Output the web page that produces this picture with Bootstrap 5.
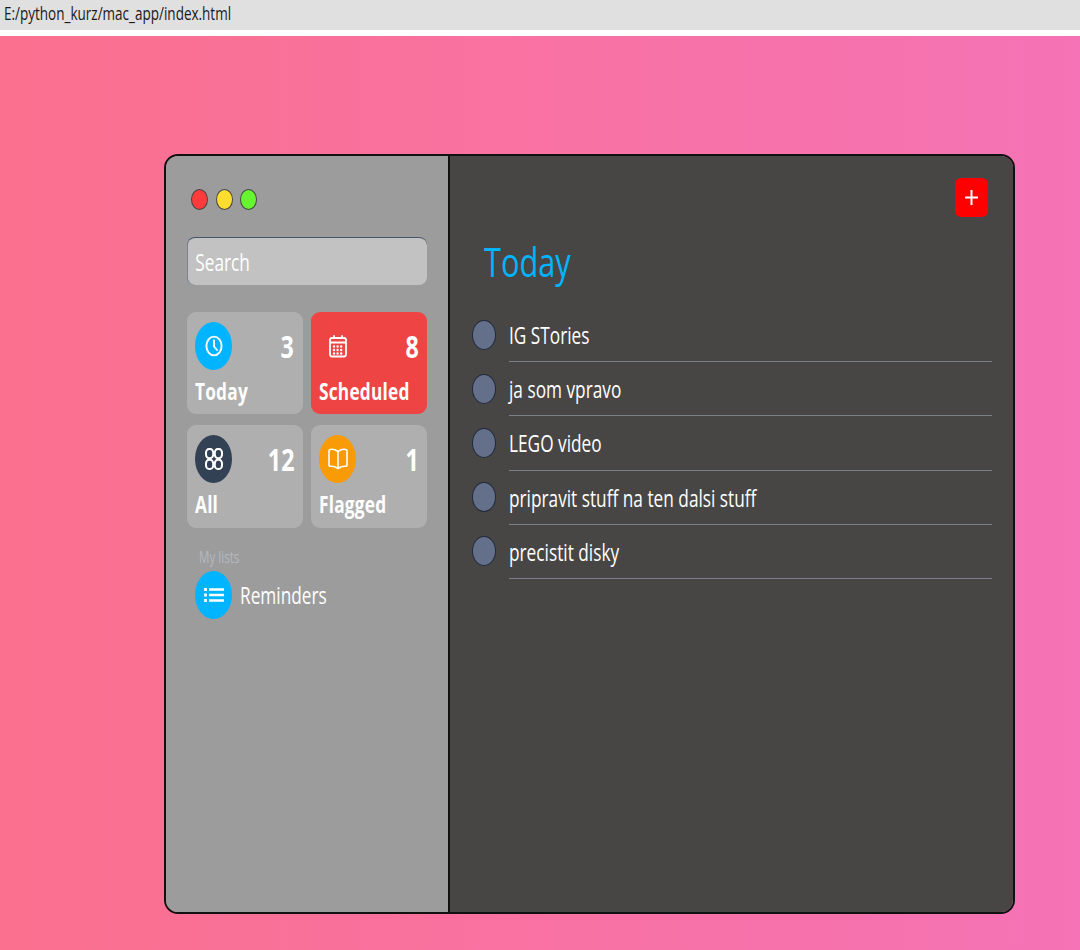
<!DOCTYPE html>
<html lang="en">
<head>
    <meta charset="UTF-8">
    <meta name="viewport" content="width=device-width, initial-scale=1.0">
    <title>Reminders</title>
    <link href="https://cdn.jsdelivr.net/npm/bootstrap@5.3.0/dist/css/bootstrap.min.css" rel="stylesheet">
    <script src="https://cdn.jsdelivr.net/npm/bootstrap@5.3.0/dist/js/bootstrap.bundle.min.js"></script>
    <style>
        html, body { height: 950px; overflow: hidden; }
        body { font-family: "Open Sans", "Liberation Sans", sans-serif; color: #fff; background: #fff; }
        /* the reference is squeezed sideways, so text is narrowed the same way */
        .squeeze { display: inline-block; white-space: nowrap; transform: scaleX(.75); transform-origin: left center; }
        .squeeze-end { transform-origin: right center; }
        .url-bar { height: 30px; background: #e0e0e0; color: #1a1a1a; font-size: 18px; line-height: 26px; padding-left: 4px; }
        .page-bg { margin-top: 6px; height: 914px; padding: 118px 65px 0 164px; background: linear-gradient(90deg, #fb708e, #f573b6); }
        .app-window { height: 760px; border: 2px solid #111; border-radius: 14px; overflow: hidden; }
        .side-pane { width: 282px; background: #9c9c9c; padding: 33px 21px 0; }
        .main-pane { background: #474644; border-left: 2px solid #111; padding: 22px 22px 0; }
        .dot { width: 17px; height: 21px; border-radius: 50%; border: 1px solid #444; }
        .dot-red { background: #ff3b3b; }
        .dot-yellow { background: #ffdd2e; }
        .dot-green { background: #66f52e; }
        .traffic { margin: 0 0 27px 4px; gap: 7.5px; }
        .search-wrap { height: 48px; }
        .search-box { display: block; height: 48px; width: 320px; background: #c2c2c2; border: 0; border-top: 1px solid #475569; border-left: 1px solid #64748b; border-radius: 11px / 8px; color: #fff; font-size: 23px; padding: 0 10px; outline: 0; transform: scaleX(.75); transform-origin: left center; }
        .search-box::placeholder { color: #fff; opacity: 1; }
        .tile-grid { display: grid; grid-template-columns: 116px 116px; grid-template-rows: 102px 103px; gap: 11px 8px; margin-top: 27px; width: 240px; }
        .tile { background: #afafaf; border-radius: 9px; padding: 10px 8px 0; }
        .tile-red { background: #ef4444; }
        .tile-left { padding-right: 9px; }
        .round-icon { width: 37px; height: 48px; border-radius: 50%; flex: none; }
        .ic-blue { background: #00b4ff; }
        .ic-dark { background: #334155; }
        .ic-orange { background: #f99b07; }
        .ic-red { background: #ef4444; }
        .tile-num { font-size: 31px; font-weight: 700; line-height: 1; }
        .tile-name { font-size: 23px; font-weight: 700; line-height: 28px; margin-top: 7px; letter-spacing: .3px; }
        .lists-label { font-size: 15.5px; color: #b4b8c0; line-height: 18px; margin: 20px 0 5px 12px; }
        .reminder-row { margin-left: 8px; gap: 8px; font-size: 23px; }
        .add-btn { width: 33px; height: 39px; background: #ff0000; border: 0; border-radius: 6px; padding: 0; }
        .day-title { color: #00b4ff; font-size: 41px; font-weight: 400; line-height: 50px; margin: 19px 0 0 12px; }
        .task-list { margin-top: 22px; width: 520px; }
        .task-row { height: 54.2px; gap: 13px; }
        .task-circle { width: 24px; height: 30px; border-radius: 50%; background: #64708a; border: 1.5px solid #1e293b; flex: none; margin-top: 11.5px; }
        .task-text { height: 100%; border-bottom: 1px solid #7a7f8a; font-size: 23px; line-height: 30px; padding-top: 12px; }
    </style>
</head>
<body>
    <div class="url-bar"><span class="squeeze">E:/python_kurz/mac_app/index.html</span></div>
    <div class="page-bg">
        <div class="app-window d-flex">
            <div class="side-pane flex-shrink-0">
                <div class="traffic d-flex">
                    <div class="dot dot-red"></div>
                    <div class="dot dot-yellow"></div>
                    <div class="dot dot-green"></div>
                </div>
                <div class="search-wrap">
                    <input class="search-box" type="text" placeholder="Search">
                </div>
                <div class="tile-grid">
                    <div class="tile tile-left">
                        <div class="d-flex justify-content-between align-items-center">
                            <div class="round-icon ic-blue d-flex align-items-center justify-content-center">
                                <svg width="18" height="22" viewBox="0 0 18 22" fill="none" stroke="#fff" stroke-width="1.9" stroke-linecap="round"><ellipse cx="9" cy="11" rx="7.6" ry="9.4"/><path d="M9 5.5V11.5L12 15"/></svg>
                            </div>
                            <div class="tile-num squeeze squeeze-end">3</div>
                        </div>
                        <div class="tile-name squeeze">Today</div>
                    </div>
                    <div class="tile tile-red">
                        <div class="d-flex justify-content-between align-items-center">
                            <div class="round-icon ic-red d-flex align-items-center justify-content-center">
                                <svg width="18" height="23" viewBox="0 0 18 23" fill="none" stroke="#fff" stroke-width="1.8" stroke-linecap="round"><path d="M3 3H15Q17 3 17 5V19Q17 21.5 15 21.5H3Q1 21.5 1 19V5Q1 3 3 3ZM1 7.5H17M5 1V3M13 1V3"/><path stroke-width="2.4" stroke-dasharray="0 3.6" d="M5 11.5H14M5 15H14M5 18.5H14"/></svg>
                            </div>
                            <div class="tile-num squeeze squeeze-end">8</div>
                        </div>
                        <div class="tile-name squeeze">Scheduled</div>
                    </div>
                    <div class="tile tile-left">
                        <div class="d-flex justify-content-between align-items-center">
                            <div class="round-icon ic-dark d-flex align-items-center justify-content-center">
                                <svg width="18" height="22" viewBox="0 0 18 22" fill="none" stroke="#fff" stroke-width="2"><rect x="1" y="1" width="7.2" height="9.2" rx="3" ry="3.6"/><rect x="9.8" y="1" width="7.2" height="9.2" rx="3" ry="3.6"/><rect x="1" y="11.8" width="7.2" height="9.2" rx="3" ry="3.6"/><rect x="9.8" y="11.8" width="7.2" height="9.2" rx="3" ry="3.6"/></svg>
                            </div>
                            <div class="tile-num squeeze squeeze-end">12</div>
                        </div>
                        <div class="tile-name squeeze">All</div>
                    </div>
                    <div class="tile">
                        <div class="d-flex justify-content-between align-items-center">
                            <div class="round-icon ic-orange d-flex align-items-center justify-content-center">
                                <svg width="20" height="24" viewBox="0 0 20 24" fill="none" stroke="#fff" stroke-width="1.6" stroke-linejoin="round"><path d="M10 4.5Q6 1.5 2 2.5Q1 2.7 1 4V18Q1 19.5 2.5 19.3Q6.5 19 10 21.5Q13.5 19 17.5 19.3Q19 19.5 19 18V4Q19 2.7 18 2.5Q14 1.5 10 4.5ZM10 4.5V21.5"/></svg>
                            </div>
                            <div class="tile-num squeeze squeeze-end">1</div>
                        </div>
                        <div class="tile-name squeeze">Flagged</div>
                    </div>
                </div>
                <div class="lists-label"><span class="squeeze">My lists</span></div>
                <div class="reminder-row d-flex align-items-center">
                    <div class="round-icon ic-blue d-flex align-items-center justify-content-center">
                        <svg width="20" height="16" viewBox="0 0 20 16" fill="none" stroke="#fff" stroke-width="2.4"><path d="M5 2.5H20M5 8H20M5 13.5H20"/><path stroke-width="2.8" stroke-dasharray="3 2.5" d="M1.5 1V15"/></svg>
                    </div>
                    <span class="squeeze">Reminders</span>
                </div>
            </div>
            <div class="main-pane flex-grow-1">
                <div class="d-flex justify-content-end pe-1">
                    <button class="add-btn d-flex align-items-center justify-content-center" type="button" aria-label="Add">
                        <svg width="13" height="15" viewBox="0 0 13 15" stroke="#fff" stroke-width="2"><path d="M6.5 0V15M0 7.5H13"/></svg>
                    </button>
                </div>
                <h1 class="day-title"><span class="squeeze">Today</span></h1>
                <div class="task-list">
                    <div class="task-row d-flex"><div class="task-circle"></div><div class="task-text flex-grow-1"><span class="squeeze">IG STories</span></div></div>
                    <div class="task-row d-flex"><div class="task-circle"></div><div class="task-text flex-grow-1"><span class="squeeze">ja som vpravo</span></div></div>
                    <div class="task-row d-flex"><div class="task-circle"></div><div class="task-text flex-grow-1"><span class="squeeze">LEGO video</span></div></div>
                    <div class="task-row d-flex"><div class="task-circle"></div><div class="task-text flex-grow-1"><span class="squeeze">pripravit stuff na ten dalsi stuff</span></div></div>
                    <div class="task-row d-flex"><div class="task-circle"></div><div class="task-text flex-grow-1"><span class="squeeze">precistit disky</span></div></div>
                </div>
            </div>
        </div>
    </div>
</body>
</html>
